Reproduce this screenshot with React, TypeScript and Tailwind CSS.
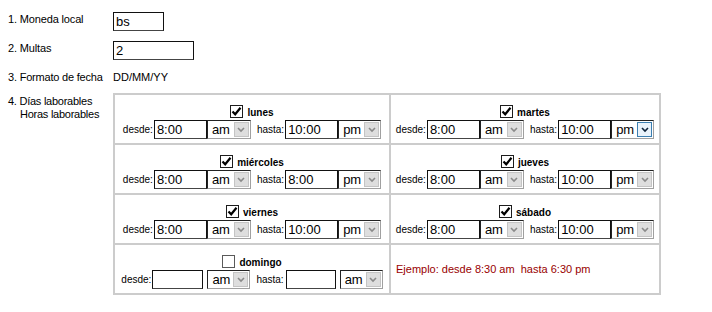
type Day = {
  name: string;
  on: boolean;
  from: string;
  fromAp: string;
  to: string;
  toAp: string;
  hot?: boolean;
};

const days: Day[] = [
  { name: "lunes", on: true, from: "8:00", fromAp: "am", to: "10:00", toAp: "pm" },
  { name: "martes", on: true, from: "8:00", fromAp: "am", to: "10:00", toAp: "pm", hot: true },
  { name: "miércoles", on: true, from: "8:00", fromAp: "am", to: "8:00", toAp: "pm" },
  { name: "jueves", on: true, from: "8:00", fromAp: "am", to: "10:00", toAp: "pm" },
  { name: "viernes", on: true, from: "8:00", fromAp: "am", to: "10:00", toAp: "pm" },
  { name: "sábado", on: true, from: "8:00", fromAp: "am", to: "10:00", toAp: "pm" },
];

function Check({ on }: { on: boolean }) {
  return (
    <span
      className={`w-[13px] h-[13px] flex items-center justify-center bg-white border ${
        on ? "border-[#1c1c1c]" : "border-[#5a5a5a]"
      }`}
    >
      {on && (
        <svg width="11" height="11" viewBox="0 0 11 11">
          <path d="M1.5 5.5 L4.2 8.3 L9.5 1.8" fill="none" stroke="#000" strokeWidth="2.2" />
        </svg>
      )}
    </span>
  );
}

function Field({ value, w }: { value: string; w: string }) {
  return (
    <input
      readOnly
      defaultValue={value}
      className={`${w} h-[19px] border border-[#111] border-b-[#444] bg-white pl-[2px] text-[13px] leading-none text-black outline-none`}
    />
  );
}

function Select({ value, w, hot }: { value: string; w: string; hot?: boolean }) {
  return (
    <div
      className={`${w} h-[19px] flex items-center justify-between border border-[#222] border-b-[#a0a0a0] border-r-[#a0a0a0] bg-white pl-[4px] pr-px`}
    >
      <span className="text-[13px] leading-none">{value}</span>
      <span
        className={`w-[15px] h-[15px] flex items-center justify-center border ${
          hot ? "border-[#3c7fb1] bg-[#eaf3fb]" : "border-[#c4c4c4] bg-[#dedede]"
        }`}
      >
        <svg width="8" height="6" viewBox="0 0 8 6">
          <path
            d="M1 1 L4 4 L7 1"
            fill="none"
            stroke={hot ? "#10243a" : "#8a8a8a"}
            strokeWidth="1.6"
          />
        </svg>
      </span>
    </div>
  );
}

function DayCell({ d }: { d: Day }) {
  return (
    <div className="h-[48px] bg-white flex flex-col items-center pt-[10px]">
      <div className="flex items-end gap-[4px] h-[13px]">
        <Check on={d.on} />
        <span className="text-[10px] font-bold leading-none">{d.name}</span>
      </div>
      <div className="flex items-center mt-[2px] text-[10px]">
        <span className="mr-px">desde:</span>
        <Field value={d.from} w="w-[53px]" />
        <Select value={d.fromAp} w="w-[44px]" />
        <span className="ml-[6px] mr-px">hasta:</span>
        <Field value={d.to} w="w-[53px]" />
        <Select value={d.toAp} w="w-[43px]" hot={d.hot} />
      </div>
    </div>
  );
}

export default function App() {
  return (
    <div className="w-[712px] h-[312px] bg-white text-black font-['Liberation_Sans',Arial,sans-serif] text-[11px] pl-[8px] pt-[12px]">
      <div className="flex items-start h-[19px]">
        <span className="w-[105px] leading-[13px] pt-px tracking-[-0.15px]">1. Moneda local</span>
        <Field value="bs" w="w-[51px]" />
      </div>
      <div className="flex items-start h-[19px] mt-[10px]">
        <span className="w-[105px] leading-[13px] pt-px tracking-[-0.15px]">2. Multas</span>
        <Field value="2" w="w-[81px]" />
      </div>
      <div className="flex items-start mt-[11px] leading-[13px]">
        <span className="w-[105px] tracking-[-0.2px]">3. Formato de fecha</span>
        <span>DD/MM/YY</span>
      </div>
      <div className="flex items-start mt-[9px]">
        <div className="w-[105px] leading-[13px] pt-[2px] tracking-[-0.25px]">
          <div>4. Días laborables</div>
          <div className="pl-[12px]">Horas laborables</div>
        </div>
        <div className="grid grid-cols-[274px_268px] gap-[2px] p-[2px] bg-[#cccccc]">
          {days.map((d) => (
            <DayCell key={d.name} d={d} />
          ))}
          <div className="h-[48px] bg-white flex flex-col items-center pt-[10px]">
            <div className="flex items-end gap-[4px] h-[13px]">
              <Check on={false} />
              <span className="text-[10px] font-bold leading-none">domingo</span>
            </div>
            <div className="flex items-center mt-[2px] text-[10px]">
              <span className="mr-px">desde:</span>
              <Field value="" w="w-[51px]" />
              <span className="w-[4px]" />
              <Select value="am" w="w-[43px]" />
              <span className="ml-[6px] mr-[2px]">hasta:</span>
              <Field value="" w="w-[50px]" />
              <span className="w-[4px]" />
              <Select value="am" w="w-[43px]" />
            </div>
          </div>
          <div className="h-[48px] bg-white flex items-center pl-[5px] text-[11px] text-[#990000]">
            Ejemplo: desde 8:30 am&nbsp; hasta 6:30 pm
          </div>
        </div>
      </div>
    </div>
  );
}
